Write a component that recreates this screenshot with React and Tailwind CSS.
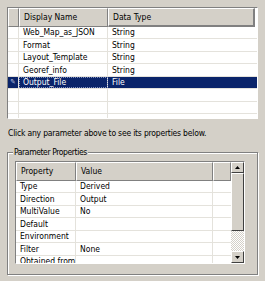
import React from 'react';

const params = [
  ['Web_Map_as_JSON', 'String'],
  ['Format', 'String'],
  ['Layout_Template', 'String'],
  ['Georef_info', 'String'],
  ['Output_File', 'File'],
];

const props = [
  ['Type', 'Derived'],
  ['Direction', 'Output'],
  ['MultiValue', 'No'],
  ['Default', ''],
  ['Environment', ''],
  ['Filter', 'None'],
  ['Obtained from', ''],
];

const headCell =
  'flex items-center h-full border-t border-l border-t-white border-l-white border-r border-b border-r-[#808080] border-b-[#808080] bg-[#d4d0c8]';

function Arrow({ down }) {
  return (
    <svg width="5" height="3" viewBox="0 0 5 3">
      <path d={down ? 'M0 0H5L2.5 3Z' : 'M0 3H5L2.5 0Z'} fill="#000" />
    </svg>
  );
}

export default function App() {
  return (
    <div
      className="relative w-[265px] h-[281px] overflow-hidden bg-[#d4d0c8] text-[8.5px] leading-none text-black"
      style={{ fontFamily: '"DejaVu Sans Condensed", "Liberation Sans", Arial, sans-serif' }}
    >
      <div className="pl-[7px] pt-[7px]">
        {/* parameter list */}
        <div className="w-[251px] h-[112px] border border-t-[#808080] border-l-[#808080] border-r-white border-b-white bg-white overflow-hidden">
          <div className="flex h-[18.5px] bg-[#d4d0c8]">
            <div className={`${headCell} w-[11px]`} />
            <div className={`${headCell} w-[89px] pl-[4px]`}>Display Name</div>
            <div className={`${headCell} w-[147px] pl-[4px] border-r-2 border-b-2 border-r-[#6f6f6f] border-b-[#6f6f6f]`}>Data Type</div>
            <div className="flex-1 bg-white" />
          </div>
          {[...params, ['', ''], ['', ''], ['', '']].map(([name, type], i) => {
            const sel = i === 4;
            return (
              <div
                key={i}
                className={`flex h-[12.5px] border-b border-[#e4e2dc] ${sel ? 'bg-[#0a246a] text-white' : ''}`}
              >
                <div className={`w-[11px] border-r border-[#e4e2dc] flex items-center justify-center text-[7px] ${sel ? 'bg-[#0a246a] text-[#c8d0e8]' : ''}`}>
                  {sel ? '✎' : ''}
                </div>
                <div className={`w-[89px] border-r border-[#e4e2dc] pl-[4px] flex items-center ${sel ? 'outline outline-1 outline-dotted outline-[#8090c0] -outline-offset-1' : ''}`}>
                  {name}
                </div>
                <div className="flex-1 pl-[4px] flex items-center">{type}</div>
              </div>
            );
          })}
        </div>

        <div className="h-[33px] flex items-center pb-[4px] pl-[1px] tracking-[-0.2px]">
          Click any parameter above to see its properties below.
        </div>

        {/* group box */}
        <div className="relative w-[251px] h-[123px] border border-[#808080] shadow-[inset_1px_1px_0_#fff,1px_1px_0_#fff]">
          <div className="absolute left-[5px] -top-[5px] px-[1px] bg-[#d4d0c8] tracking-[-0.4px]">Parameter Properties</div>
          <div className="ml-[7px] mt-[8px] w-[230px] h-[103px] flex border border-t-[#808080] border-l-[#808080] border-r-white border-b-white bg-white">
            <div className="flex-1 overflow-hidden">
              <div className="flex h-[18.5px] bg-[#d4d0c8]">
                <div className={`${headCell} w-[60px] pl-[4px]`}>Property</div>
                <div className={`${headCell} w-[137px] pl-[4px]`}>Value</div>
                <div className={`${headCell} flex-1`} />
              </div>
              {props.map(([k, v]) => (
                <div key={k} className="flex h-[12.5px] border-b border-[#e4e2dc]">
                  <div className="w-[60px] border-r border-[#e4e2dc] pl-[4px] flex items-center whitespace-nowrap">{k}</div>
                  <div className="w-[137px] border-r border-[#e4e2dc] pl-[4px] flex items-center">{v}</div>
                  <div className="flex-1" />
                </div>
              ))}
            </div>
            {/* scrollbar */}
            <div className="w-[13px] flex flex-col">
              <div className="h-[11px] flex items-center justify-center bg-[#d4d0c8] border border-t-white border-l-white border-r-[#404040] border-b-[#404040]">
                <Arrow />
              </div>
              <div className="h-[58px] bg-[#d4d0c8] border border-t-white border-l-white border-r-[#404040] border-b-[#404040]" />
              <div className="flex-1 bg-[repeating-conic-gradient(#fff_0_25%,#d4d0c8_0_50%)] bg-[length:2px_2px]" />
              <div className="h-[12px] flex items-center justify-center bg-[#d4d0c8] border border-t-white border-l-white border-r-[#404040] border-b-[#404040]">
                <Arrow down />
              </div>
            </div>
          </div>
        </div>
      </div>
    </div>
  );
}
